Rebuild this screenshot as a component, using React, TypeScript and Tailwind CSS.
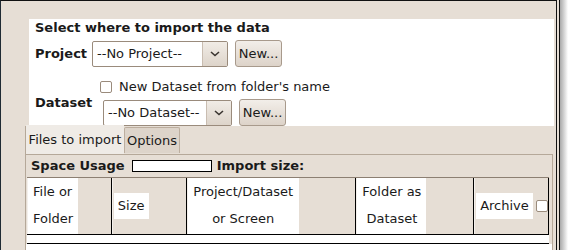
import React from "react";

const font = { fontFamily: '"DejaVu Sans", Verdana, sans-serif' };

const Chevron = () => (
  <svg width="10" height="6" viewBox="0 0 10 6" fill="none">
    <path d="M1 1 L5 4.5 L9 1" stroke="#3a3530" strokeWidth="1.6" />
  </svg>
);

const Select = ({ label, width }: { label: string; width: string }) => (
  <div
    className={`flex h-[26px] ${width} items-stretch overflow-hidden rounded-[2px] border border-[#9a8b7c] bg-white`}
  >
    <div className="flex flex-1 items-center pl-[4px] text-[13px] text-[#1a1a1a]">{label}</div>
    <div className="flex w-[25px] items-center justify-center border-l border-[#c9bdb1] bg-gradient-to-b from-[#f1ece6] to-[#ddd4ca]">
      <Chevron />
    </div>
  </div>
);

const NewButton = () => (
  <button className="flex h-[27px] w-[47px] items-center justify-center rounded-[3px] border border-[#a89a8c] bg-gradient-to-b from-[#f2eee9] to-[#ddd3c9] text-[13px] text-[#1a1a1a]">
    New...
  </button>
);

const HeaderCell = ({
  width,
  children,
  center,
}: {
  width: string;
  children: React.ReactNode;
  center?: boolean;
}) => (
  <div
    className={`flex ${width} items-center border-r border-black border-l border-l-[#f4f0ec] ${
      center ? "justify-start" : "items-stretch"
    }`}
  >
    {children}
  </div>
);

export default function App() {
  return (
    <div className="flex h-[250px] w-[573px] overflow-hidden bg-white text-[#1a1a1a]" style={font}>
      <div className="flex w-[556px] flex-col border-l border-t border-l-[#1f2a33] border-t-[#111] bg-[#e6ded5] pt-[18px]">
        {/* import location panel */}
        <div className="ml-[28px] mr-[2px] flex h-[107px] flex-col bg-white pl-[6px]">
          <div className="mt-[1px] text-[13px] font-bold leading-[16px]">Select where to import the data</div>
          <div className="mt-[4px] flex items-center">
            <span className="w-[57px] text-[13px] font-bold">Project</span>
            <Select label="--No Project--" width="w-[136px]" />
            <div className="ml-[7px]">
              <NewButton />
            </div>
          </div>
          <div className="mt-[12px] flex items-center">
            <span className="w-[65px] text-[13px] font-bold">Dataset</span>
            <div className="flex flex-col">
              <label className="flex items-center gap-[7px] text-[13px] leading-[16px]">
                <span className="h-[12px] w-[12px] rounded-[2px] border border-[#9a8b7c] bg-white" />
                New Dataset from folder's name
              </label>
              <div className="ml-[3px] mt-[4px] flex items-center">
                <Select label="--No Dataset--" width="w-[129px]" />
                <div className="ml-[7px]">
                  <NewButton />
                </div>
              </div>
            </div>
          </div>
        </div>

        {/* tabs */}
        <div className="ml-[24px] mr-[3px] flex flex-1 flex-col border-l border-[#b5a899]">
          <div className="flex h-[28px] items-end">
            <div className="flex h-[29px] w-[98px] items-center justify-center bg-[#efebe6] text-[13px]">
              Files to import
            </div>
            <div className="mb-[1px] flex h-[26px] w-[56px] items-center justify-center rounded-t-[2px] border border-b-0 border-[#bcae9f] bg-[#ddd4ca] text-[13px]">
              Options
            </div>
          </div>
          <div className="flex flex-1 flex-col border-r border-t border-[#b5a899]">
            <div className="flex h-[22px] items-center pl-[5px] text-[13px] font-bold">
              Space Usage
              <span className="ml-[7px] mr-[5px] h-[12px] w-[80px] border border-black bg-white" />
              Import size:
            </div>
            <div className="ml-[1px] mr-[3px] flex h-[58px] border-b border-t border-b-black border-t-[#8c7f72] text-[13px] leading-[27px]">
              <HeaderCell width="w-[85px]">
                <div className="bg-white px-[5px] py-0">
                  File or
                  <br />
                  Folder
                </div>
              </HeaderCell>
              <HeaderCell width="w-[75px]" center>
                <div className="ml-[1px] bg-white px-[4px] leading-[26px]">Size</div>
              </HeaderCell>
              <HeaderCell width="w-[170px]">
                <div className="w-[111px] bg-white text-center">
                  Project/Dataset
                  <br />
                  or Screen
                </div>
              </HeaderCell>
              <HeaderCell width="w-[118px]">
                <div className="w-[69px] bg-white text-center">
                  Folder as
                  <br />
                  Dataset
                </div>
              </HeaderCell>
              <HeaderCell width="w-[75px]" center>
                <div className="ml-[1px] bg-white px-[4px] leading-[26px]">Archive</div>
                <span className="ml-[3px] h-[12px] w-[12px] rounded-[2px] border border-[#9a8b7c] bg-white" />
              </HeaderCell>
            </div>
            <div className="ml-[1px] mr-[3px] h-[9px] border-b border-black bg-white" />
            <div className="flex-1 bg-white" />
          </div>
        </div>
      </div>
      <div className="w-px bg-[#111]" />
      <div className="w-[2px] bg-[#e6ded5]" />
      <div className="w-px bg-[#111]" />
      <div className="w-[8px] bg-gradient-to-r from-[#a9a9a9] to-white" />
    </div>
  );
}
